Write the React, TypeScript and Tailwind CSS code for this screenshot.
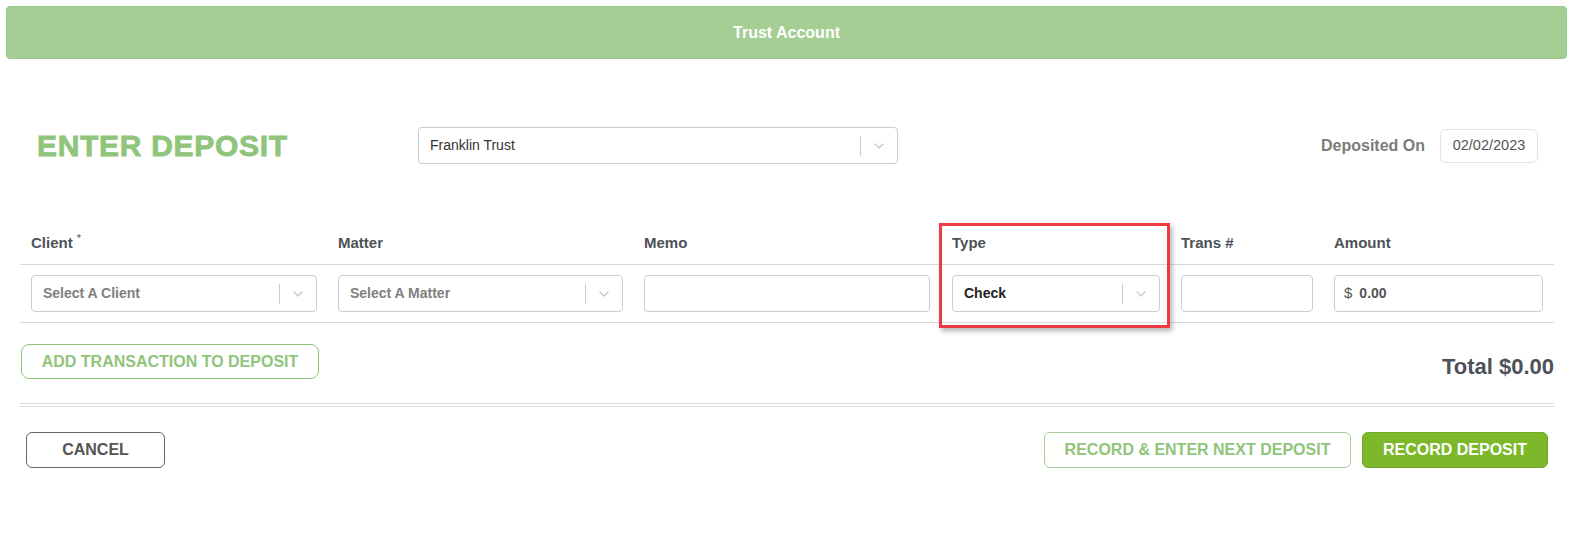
import { ChevronDown } from 'lucide-react';

interface SelectBoxProps {
  value: string;
  placeholder?: boolean;
  className?: string;
  bold?: boolean;
}

function SelectBox({ value, placeholder, className = '', bold }: SelectBoxProps) {
  return (
    <div
      className={`flex items-center h-[37px] rounded-[4px] border border-[#cccccc] bg-white ${className}`}
    >
      <span
        className={`flex-1 pl-[11px] text-[14px] truncate ${
          placeholder ? 'font-bold text-[#808080]' : bold ? 'font-bold text-[#222]' : 'text-[#333]'
        }`}
      >
        {value}
      </span>
      <span className="h-[20px] w-px bg-[#cccccc]" />
      <span className="w-[36px] flex items-center justify-center">
        <ChevronDown className="h-[16px] w-[16px] text-[#c8c8c8]" strokeWidth={2} />
      </span>
    </div>
  );
}

export default function App() {
  return (
    <div className="w-full h-[547px] overflow-hidden bg-white pl-[6px] pr-[11px] pt-[6px] font-['Liberation_Sans',Arial,sans-serif]">
      {/* Top banner */}
      <div className="h-[53px] rounded-[4px] bg-[#a5ce94] border border-[#9ac88a] flex items-center justify-center text-white font-bold text-[16px]">
        Trust Account
      </div>

      {/* Title row */}
      <div className="mt-[68px] flex items-center h-[37px] pr-[29px]">
        <h1 className="w-[412px] pl-[31px] text-[30px] leading-none font-bold tracking-[0.7px] text-[#8fc57a] [-webkit-text-stroke:0.8px_#8fc57a]">
          ENTER DEPOSIT
        </h1>
        <SelectBox value="Franklin Trust" className="w-[480px]" />
        <div className="ml-auto flex items-center gap-[15px]">
          <span className="text-[16px] font-bold text-[#7b7b7b]">Deposited On</span>
          <div className="w-[98px] h-[34px] rounded-[6px] border border-[#e3e3e3] flex items-center justify-center text-[14.5px] text-[#555]">
            02/02/2023
          </div>
        </div>
      </div>

      {/* Transactions table */}
      <div className="relative mt-[55px] ml-[14px] w-[1534px]">
        <div className="grid grid-cols-[307px_307px_307px_229px_153px_231px] h-[46px] pt-[3px] items-center border-b border-[#d9d9d9] text-[15px] font-bold text-[#4d5259]">
          <div className="pl-[11px]">
            Client <sup className="text-[11px] font-normal">*</sup>
          </div>
          <div className="pl-[11px]">Matter</div>
          <div className="pl-[10px]">Memo</div>
          <div className="pl-[11px]">Type</div>
          <div className="pl-[11px]">Trans #</div>
          <div className="pl-[11px]">Amount</div>
        </div>
        <div className="grid grid-cols-[307px_307px_307px_229px_153px_231px] pt-[10px] pb-[10px] border-b border-[#d9d9d9]">
          <div className="pl-[11px] pr-[10px]">
            <SelectBox value="Select A Client" placeholder />
          </div>
          <div className="pl-[11px] pr-[11px]">
            <SelectBox value="Select A Matter" placeholder />
          </div>
          <div className="pl-[10px] pr-[11px]">
            <div className="h-[37px] rounded-[4px] border border-[#cccccc]" />
          </div>
          <div className="pl-[11px] pr-[10px]">
            <SelectBox value="Check" bold />
          </div>
          <div className="pl-[11px] pr-[10px]">
            <div className="h-[37px] rounded-[4px] border border-[#cccccc]" />
          </div>
          <div className="pl-[11px] pr-[11px]">
            <div className="h-[37px] rounded-[4px] border border-[#cccccc] flex items-center pl-[9px] gap-[7px] text-[#555]">
              <span className="text-[15px]">$</span>
              <span className="text-[14px] font-bold">0.00</span>
            </div>
          </div>
        </div>

        {/* highlight annotation */}
        <div className="absolute left-[919px] top-[4px] w-[231px] h-[105px] border-[3px] border-[#ec3b42] shadow-[2px_3px_5px_rgba(0,0,0,0.3)] pointer-events-none" />

        <div className="flex justify-between items-start">
          <button className="mt-[21px] ml-px h-[35px] w-[298px] rounded-[8px] border border-[#8fc57a] text-[16px] font-bold text-[#8fc57a]">
            ADD TRANSACTION TO DEPOSIT
          </button>
          <div className="mt-[33px] text-[22px] font-bold text-[#4d5259] leading-none">Total $0.00</div>
        </div>

        <div className="mt-[24px] border-t border-[#d9d9d9]" />
        <div className="mt-[2px] border-t border-[#d9d9d9]" />

        <div className="mt-[25px] flex items-center pr-[6px]">
          <button className="ml-[6px] h-[36px] w-[139px] rounded-[6px] border border-[#666] text-[16px] font-bold text-[#555]">
            CANCEL
          </button>
          <div className="ml-auto flex items-center gap-[11px]">
            <button className="h-[36px] w-[307px] rounded-[6px] border border-[#a5ce94] text-[16px] font-bold text-[#8fc57a]">
              RECORD &amp; ENTER NEXT DEPOSIT
            </button>
            <button className="h-[36px] w-[186px] rounded-[6px] border border-[#6fa823] bg-[#7cb82a] text-[16px] font-bold text-white">
              RECORD DEPOSIT
            </button>
          </div>
        </div>
      </div>
    </div>
  );
}
